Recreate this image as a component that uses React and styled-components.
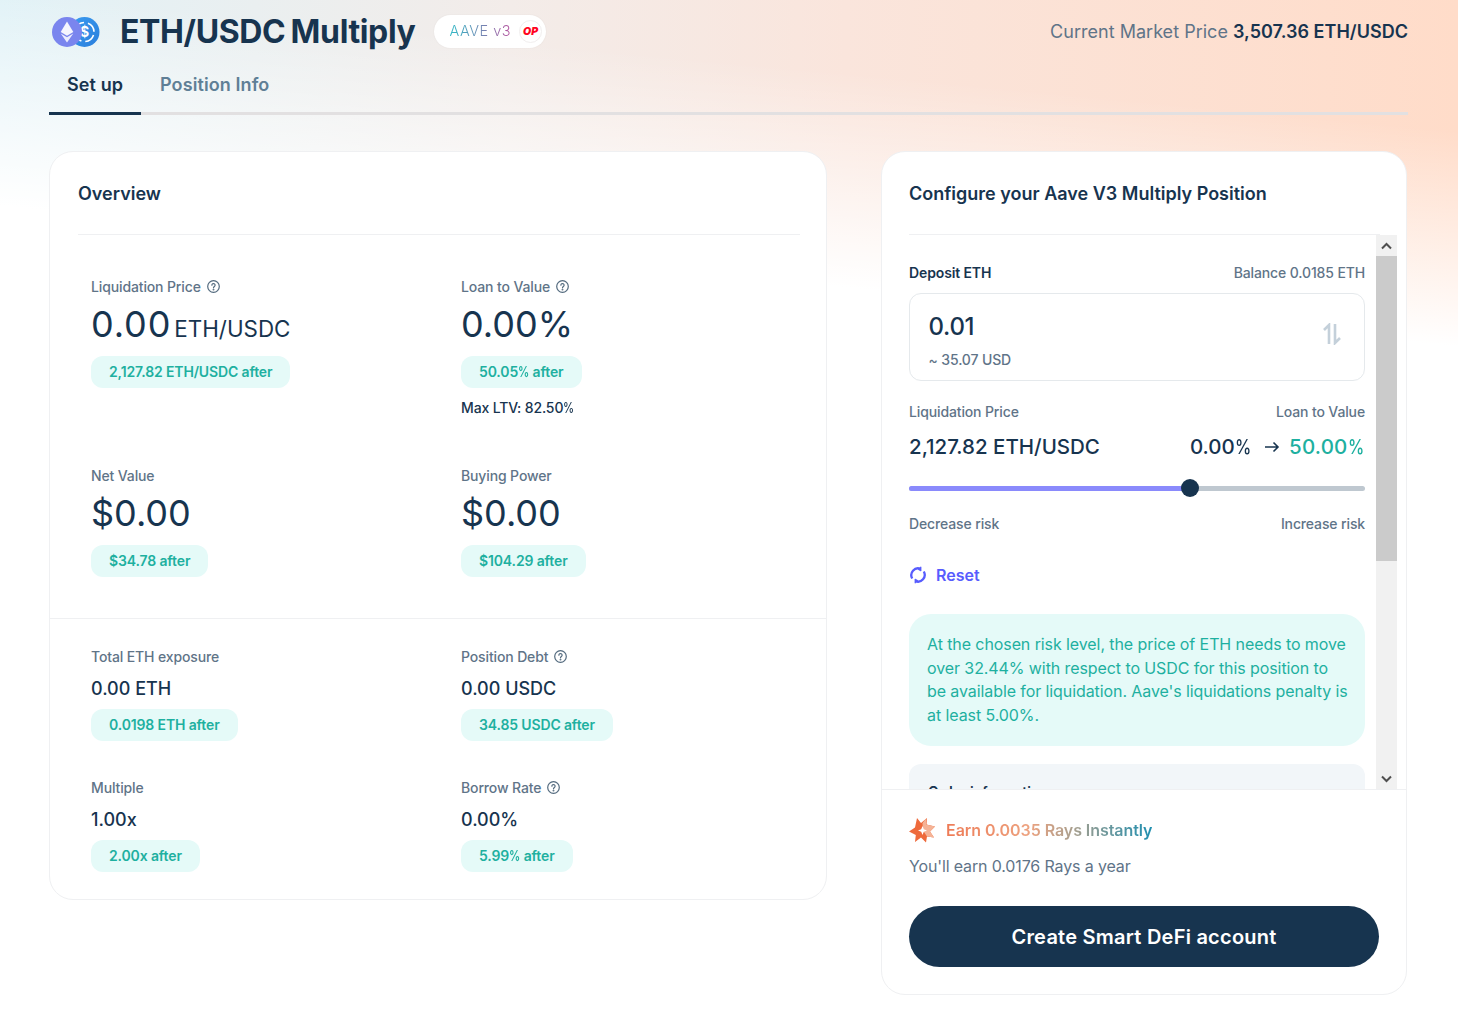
import React from 'react';
import styled, { createGlobalStyle } from 'styled-components';

const Global = createGlobalStyle`
  html, body { margin: 0; padding: 0; background: #fff; }
  body {
    font-family: Inter, "Noto Sans", sans-serif;
    color: #17344f;
  }
  * { box-sizing: border-box; }
`;

const Page = styled.div`
  width: 1458px;
  height: 1012px;
  overflow: hidden;
  padding: 0 50px 0 49px;
  background:
    linear-gradient(185.500deg,
      rgba(255,255,255,0) 130px,
      rgba(255,255,255,1) 345px),
    linear-gradient(to right, #e1f2f7 0%, #f3ece9 35%, #fae5dc 58%, #ffdcc9 100%);
`;
const Header = styled.header`
  height: 62px;
  display: flex;
  align-items: center;
  padding-left: 3px;
`;
const Logos = styled.svg`
  width: 48px; height: 32px; flex: none; margin-top: 2px;
`;
const Title = styled.h1`
  margin: 2px 0 0 20px;
  font-size: 32px;
  line-height: 38px;
  font-weight: 700;
  letter-spacing: -0.36px;
  color: #17344f;
  word-spacing: -2px;
`;
const Protocol = styled.div`
  margin-left: 19px;
  height: 33px;
  width: 112px;
  border-radius: 17px;
  background: #fff;
  box-shadow: 0 0 2px rgba(0,0,0,.06);
  display: flex;
  align-items: center;
  padding-left: 15px;
`;
const AaveText = styled.span`
  margin-bottom: 1px;
  font-size: 14.5px;
  font-weight: 300;
  letter-spacing: .5px;
  background: linear-gradient(90deg, #2ebac6, #7a7fb0 60%, #b6509e);
  -webkit-background-clip: text;
  background-clip: text;
  color: transparent;
`;
const OpBadge = styled.span`
  margin-left: 8px;
  width: 23px; height: 23px;
  border-radius: 50%;
  border: 1px solid #f1eeee;
  display: flex; align-items: center; justify-content: center;
  font-size: 10.5px;
  font-weight: 900;
  font-style: italic;
  color: #ff0420;
`;
const Market = styled.div`
  margin-left: auto;
  font-size: 18px;
  letter-spacing: .02px;
  color: #5f7488;
  b { font-weight: 600; color: #17344f; }
`;
const Tabs = styled.nav`
  display: flex;
  gap: 1px;
  height: 53px;
  border-bottom: 3px solid #e2e0e1;
`;
const Tab = styled.div`
  height: 53px;
  padding: 11px 18px 0;
  width: ${p => p.$w}px;
  font-size: 18px;
  line-height: 24px;
  font-weight: 600;
  letter-spacing: .1px;
  white-space: nowrap;
  color: ${p => (p.$active ? '#17344f' : '#5f7f96')};
  border-bottom: 3px solid ${p => (p.$active ? '#17344f' : 'transparent')};
`;
const Columns = styled.main`
  display: flex;
  gap: 54px;
  margin-top: 36px;
  align-items: flex-start;
`;
const Card = styled.section`
  width: ${p => p.$w}px;
  height: ${p => p.$h}px;
  background: #fff;
  border: 1px solid #eff0f2;
  border-radius: 24px;
  overflow: hidden;
`;
const CardHeader = styled.div`
  height: 83px;
  margin: 0 26px 0 ${p => p.$ml}px;
  padding-top: 30px;
  font-size: 18px;
  line-height: 24px;
  font-weight: 600;
  color: #17344f;
  border-bottom: 1px solid #eff0f2;
`;
const TopGrid = styled.div`
  display: grid;
  grid-template-columns: 370px 1fr;
  grid-auto-rows: 189px;
  height: 384px;
  padding: 42px 0 0 41px;
  border-bottom: 1px solid #eff0f2;
`;
const BottomGrid = styled.div`
  display: grid;
  grid-template-columns: 370px 1fr;
  grid-auto-rows: 131px;
  padding: 28px 0 0 41px;
`;
const Stat = styled.div`
  display: flex;
  flex-direction: column;
  align-items: flex-start;
`;
const Label = styled.div`
  display: flex;
  align-items: center;
  gap: 6px;
  font-size: 14px;
  line-height: 20px;
  font-weight: 540;
  letter-spacing: -.13px;
  color: #5f7488;
`;
const BigValue = styled.div`
  margin-top: 6px;
  height: 42px;
  font-size: 36px;
  line-height: 42px;
  font-weight: 400;
  letter-spacing: ${p => (p.$wide ? '.9px' : '0')};
  color: #17344f;
  white-space: nowrap;
  small { font-size: 22.400px; line-height: 1; letter-spacing: 0; margin-left: 3px; }
`;
const SmallValue = styled.div`
  margin-top: 10px;
  font-size: 18px;
  line-height: 24px;
  font-weight: 550;
  color: #17344f;
`;
const After = styled.div`
  margin-top: ${p => p.$mt}px;
  height: 32px;
  padding: 0 18px;
  border-radius: 12px;
  background: #e5faf8;
  color: #1eb0a0;
  font-size: 14px;
  line-height: 32px;
  font-weight: 600;
  letter-spacing: -.14px;
`;
const Pct = styled.span`
  display: inline-block;
  transform: scaleX(.8);
  transform-origin: left center;
  margin-right: -.2em;
`;
const MaxLtv = styled.div`
  margin-top: 10px;
  font-size: 14px;
  line-height: 20px;
  font-weight: 550;
  letter-spacing: -.14px;
  color: #17344f;
`;
const Scroller = styled.div`
  height: 555px;
  display: flex;
  border-bottom: 1px solid #eff0f2;
  overflow: hidden;
`;
const ScrollContent = styled.div`
  width: 494px;
  padding: 28px 11px 0 27px;
  flex: none;
`;
const Scrollbar = styled.div`
  width: 21px;
  flex: none;
  background: #f1f1f1;
  display: flex;
  flex-direction: column;
`;
const ScrollBtn = styled.div`
  height: 21px;
  flex: none;
  display: flex;
  align-items: center;
  justify-content: center;
`;
const Thumb = styled.div`
  height: 305px;
  background: #cbcbcb;
`;
const Spacer = styled.div`flex: 1;`;
const RowBetween = styled.div`
  display: flex;
  justify-content: space-between;
  align-items: center;
`;
const FieldLabel = styled.span`
  font-size: 14px;
  line-height: 20px;
  font-weight: ${p => (p.$strong ? 600 : 540)};
  letter-spacing: -.13px;
  color: ${p => (p.$strong ? '#17344f' : '#5f7488')};
`;
const InputBox = styled.div`
  margin-top: 10px;
  height: 88px;
  border: 1px solid #e5e9ec;
  border-radius: 12px;
  padding: 19px 22px 0 18.500px;
  display: flex;
  justify-content: space-between;
`;
const InputValue = styled.div`
  font-size: 24px;
  line-height: 28px;
  font-weight: 550;
  color: #17344f;
  letter-spacing: -.3px;
`;
const InputSub = styled.div`
  margin-top: 9px;
  font-size: 14px;
  line-height: 20px;
  font-weight: 540;
  color: #5f7488;
  letter-spacing: -.13px;
`;
const SwapIcon = styled.svg`
  width: 20px; height: 22px; margin-top: 10px;
`;
const LiqLabels = styled(RowBetween)`
  margin-top: 21px;
`;
const LiqValues = styled(RowBetween)`
  margin-top: 11px;
  font-size: 20.500px;
  line-height: 28px;
  font-weight: 500;
  color: #17344f;
`;
const Ltv = styled.div`
  display: flex;
  align-items: center;
`;
const LtvAfter = styled.span`
  color: #1eb0a0;
  margin: 0 1px 0 9px;
  letter-spacing: .2px;
`;
const LtvArrow = styled.svg`
  width: 16px; height: 12px; margin-left: 13px;
`;
const Slider = styled.div`
  position: relative;
  margin-top: 25px;
  height: 5px;
  border-radius: 3px;
  background: #bfc8d0;
`;
const SliderFill = styled.div`
  height: 5px;
  border-radius: 3px 0 0 3px;
  background: #8a8afc;
`;
const SliderThumb = styled.div`
  position: absolute;
  top: -7px;
  margin-left: -9px;
  width: 18px; height: 18px;
  border-radius: 50%;
  background: #17344f;
`;
const RiskLabels = styled(RowBetween)`
  margin-top: 23px;
`;
const ResetRow = styled.div`
  margin-top: 31px;
  display: flex;
  align-items: center;
  gap: 9px;
  font-size: 16px;
  line-height: 20px;
  font-weight: 600;
  color: #575cfe;
`;
const Notice = styled.div`
  margin-top: 29px;
  height: 132px;
  border-radius: 22px;
  background: #e5faf8;
  color: #1eb0a0;
  padding: 19px 0 0 18px;
  font-size: 16px;
  line-height: 23.500px;
  font-weight: 400;
  letter-spacing: -.09px;
  white-space: nowrap;
`;
const OrderBox = styled.div`
  margin-top: 18px;
  height: 120px;
  border-radius: 12px 12px 0 0;
  background: #f2f6f9;
  padding: 18px 19px;
  font-size: 14px;
  line-height: 20px;
  font-weight: 600;
  color: #17344f;
`;
const Footer = styled.div`
  padding: 26px 27px 0;
`;
const EarnRow = styled.div`
  display: flex;
  align-items: center;
  gap: 10px;
  height: 28px;
`;
const RaysIcon = styled.svg`
  width: 27px; height: 27px; flex: none;
`;
const EarnText = styled.span`
  font-size: 16px;
  line-height: 20px;
  font-weight: 600;
  letter-spacing: -.06px;
  background: linear-gradient(90deg, #ee7b56 0%, #eda27f 40%, #a89f8e 62%, #1f8fb0 100%);
  -webkit-background-clip: text;
  background-clip: text;
  color: transparent;
`;
const YearText = styled.div`
  margin-top: 11px;
  font-size: 16px;
  line-height: 22px;
  letter-spacing: -.14px;
  color: #5f7488;
`;
const Cta = styled.button`
  display: block;
  margin-top: 29px;
  width: 470px;
  height: 61px;
  border: 0;
  border-radius: 31px;
  background: #17344f;
  color: #fff;
  font-family: inherit;
  font-size: 20px;
  font-weight: 600;
  letter-spacing: .24px;
`;

const Help = () => (
  <svg width="13" height="13" viewBox="0 0 13 13" fill="none" stroke="#536a7e" strokeWidth="1.2" style={{ marginBottom: 2 }}>
    <circle cx="6.5" cy="6.5" r="5.8" />
    <path d="M4.9 5.2a1.6 1.6 0 1 1 2.5 1.3c-.6.4-.9.7-.9 1.3" strokeLinecap="round" />
    <circle cx="6.5" cy="9.6" r=".35" fill="#536a7e" />
  </svg>
);

const Stats = ({ label, help, value, unit, after, pct, big, wide, children }) => (
  <Stat>
    <Label>{label}{help && <Help />}</Label>
    {big ? (
      <BigValue $wide={wide}>{value}{unit && <small>{unit}</small>}</BigValue>
    ) : (
      <SmallValue>{value}</SmallValue>
    )}
    <After $mt={big ? 11 : 8}>
      {pct ? <>{pct}<Pct>%</Pct> after</> : after}
    </After>
    {children}
  </Stat>
);

const Chevron = ({ down }) => (
  <svg width="11" height="8" viewBox="0 0 11 8" fill="none" stroke="#4f4f4f" strokeWidth="2">
    <path d={down ? 'M1 1.5l4.5 4.5 4.5-4.5' : 'M1 6.5l4.5-4.5 4.5 4.5'} />
  </svg>
);

export default function App() {
  return (
    <Page>
      <Global />
      <Header>
        <Logos viewBox="0 0 48 32">
          <defs>
            <linearGradient id="usdc" x1="0" y1="0" x2="1" y2="1">
              <stop offset="0" stopColor="#3b9bf0" />
              <stop offset="1" stopColor="#2a7fdc" />
            </linearGradient>
          </defs>
          <circle cx="32.5" cy="16" r="15" fill="url(#usdc)" />
          <circle cx="32.5" cy="16" r="9.5" fill="none" stroke="#fff" strokeWidth="1.6" strokeDasharray="11 4" strokeDashoffset="-3" />
          <text x="32.5" y="21" textAnchor="middle" fontSize="14" fontWeight="700" fontFamily="Inter" fill="#fff">$</text>
          <circle cx="15" cy="16" r="15" fill="#7a85ee" />
          <path d="M15 5.5l6.3 10.6L15 19.8l-6.3-3.7z" fill="#fff" opacity=".92" />
          <path d="M15 21.3l6.3-3.7L15 26.5l-6.3-8.9z" fill="#fff" opacity=".85" />
        </Logos>
        <Title>ETH/USDC Multiply</Title>
        <Protocol>
          <AaveText>AAVE v3</AaveText>
          <OpBadge>OP</OpBadge>
        </Protocol>
        <Market>Current Market Price <b>3,507.36 ETH/USDC</b></Market>
      </Header>
      <Tabs>
        <Tab $active $w={92}>Set up</Tab>
        <Tab $w={170}>Position Info</Tab>
      </Tabs>
      <Columns>
        <Card $w={778} $h={749}>
          <CardHeader $ml={28}>Overview</CardHeader>
          <TopGrid>
            <Stats big wide label="Liquidation Price" help value="0.00" unit="ETH/USDC" after="2,127.82 ETH/USDC after" />
            <Stats big label="Loan to Value" help value="0.00%" pct="50.05">
              <MaxLtv>Max LTV: 82.50<Pct>%</Pct></MaxLtv>
            </Stats>
            <Stats big label="Net Value" value="$0.00" after="$34.78 after" />
            <Stats big label="Buying Power" value="$0.00" after="$104.29 after" />
          </TopGrid>
          <BottomGrid>
            <Stats label="Total ETH exposure" value="0.00 ETH" after="0.0198 ETH after" />
            <Stats label="Position Debt" help value="0.00 USDC" after="34.85 USDC after" />
            <Stats label="Multiple" value="1.00x" after="2.00x after" />
            <Stats label="Borrow Rate" help value="0.00%" pct="5.99" />
          </BottomGrid>
        </Card>
        <Card $w={526} $h={844}>
          <CardHeader $ml={27}>Configure your Aave V3 Multiply Position</CardHeader>
          <Scroller>
            <ScrollContent>
              <RowBetween>
                <FieldLabel $strong>Deposit ETH</FieldLabel>
                <FieldLabel>Balance 0.0185 ETH</FieldLabel>
              </RowBetween>
              <InputBox>
                <div>
                  <InputValue>0.01</InputValue>
                  <InputSub>~ 35.07 USD</InputSub>
                </div>
                <SwapIcon viewBox="0 0 20 22" fill="none" stroke="#c4d0da" strokeWidth="2.6">
                  <path d="M7 21V2L2 7" />
                  <path d="M13 1v19l5-5" />
                </SwapIcon>
              </InputBox>
              <LiqLabels>
                <FieldLabel>Liquidation Price</FieldLabel>
                <FieldLabel>Loan to Value</FieldLabel>
              </LiqLabels>
              <LiqValues>
                <div>2,127.82 ETH/USDC</div>
                <Ltv>
                  <span>0.00<Pct>%</Pct></span>
                  <LtvArrow viewBox="0 0 16 12" fill="none" stroke="#17344f" strokeWidth="1.6">
                    <path d="M1 6h13M9.500 1.500L14 6l-4.500 4.500" />
                  </LtvArrow>
                  <LtvAfter>50.00<Pct>%</Pct></LtvAfter>
                </Ltv>
              </LiqValues>
              <Slider>
                <SliderFill style={{ width: '281px' }} />
                <SliderThumb style={{ left: '281px' }} />
              </Slider>
              <RiskLabels>
                <FieldLabel>Decrease risk</FieldLabel>
                <FieldLabel>Increase risk</FieldLabel>
              </RiskLabels>
              <ResetRow>
                <svg width="18" height="18" viewBox="0 0 18 18" fill="none" stroke="#575cfe" strokeWidth="2.300">
                  <path d="M11.500 2.800A6.800 6.800 0 0 0 3.200 12.500" />
                  <path d="M6.500 15.200A6.800 6.800 0 0 0 14.800 5.500" />
                  <path d="M12 .8v4.200l-2.800-1.500zM6 17.200V13l2.800 1.500z" fill="#575cfe" strokeWidth="0.800" />
                </svg>
                Reset
              </ResetRow>
              <Notice>
                At the chosen risk level, the price of ETH needs to move<br />
                over 32.44% with respect to USDC for this position to<br />
                be available for liquidation. Aave's liquidations penalty is<br />
                at least 5.00%.
              </Notice>
              <OrderBox>Order information</OrderBox>
            </ScrollContent>
            <Scrollbar>
              <ScrollBtn><Chevron /></ScrollBtn>
              <Thumb />
              <Spacer />
              <ScrollBtn><Chevron down /></ScrollBtn>
            </Scrollbar>
          </Scroller>
          <Footer>
            <EarnRow>
              <RaysIcon viewBox="0 0 27 27">
                <path d="M8 1l4 5 6-5-.5 6.500L26 9.500l-5 5 4 6-7-1-1 6-5-5-6 4.500.8-7L0 14.500l6-4z" fill="#ee6a3c" />
                <path d="M13.500 6l4-5-.5 6.500L26 9.500l-5 5 4 6-7-1-4-6z" fill="#f5b396" />
                <path d="M13.500 9l1.300 3.200L18 13.500l-3.200 1.300L13.500 18l-1.300-3.200L9 13.500l3.200-1.300z" fill="#fff" />
              </RaysIcon>
              <EarnText>Earn 0.0035 Rays Instantly</EarnText>
            </EarnRow>
            <YearText>You'll earn 0.0176 Rays a year</YearText>
            <Cta>Create Smart DeFi account</Cta>
          </Footer>
        </Card>
      </Columns>
    </Page>
  );
}
